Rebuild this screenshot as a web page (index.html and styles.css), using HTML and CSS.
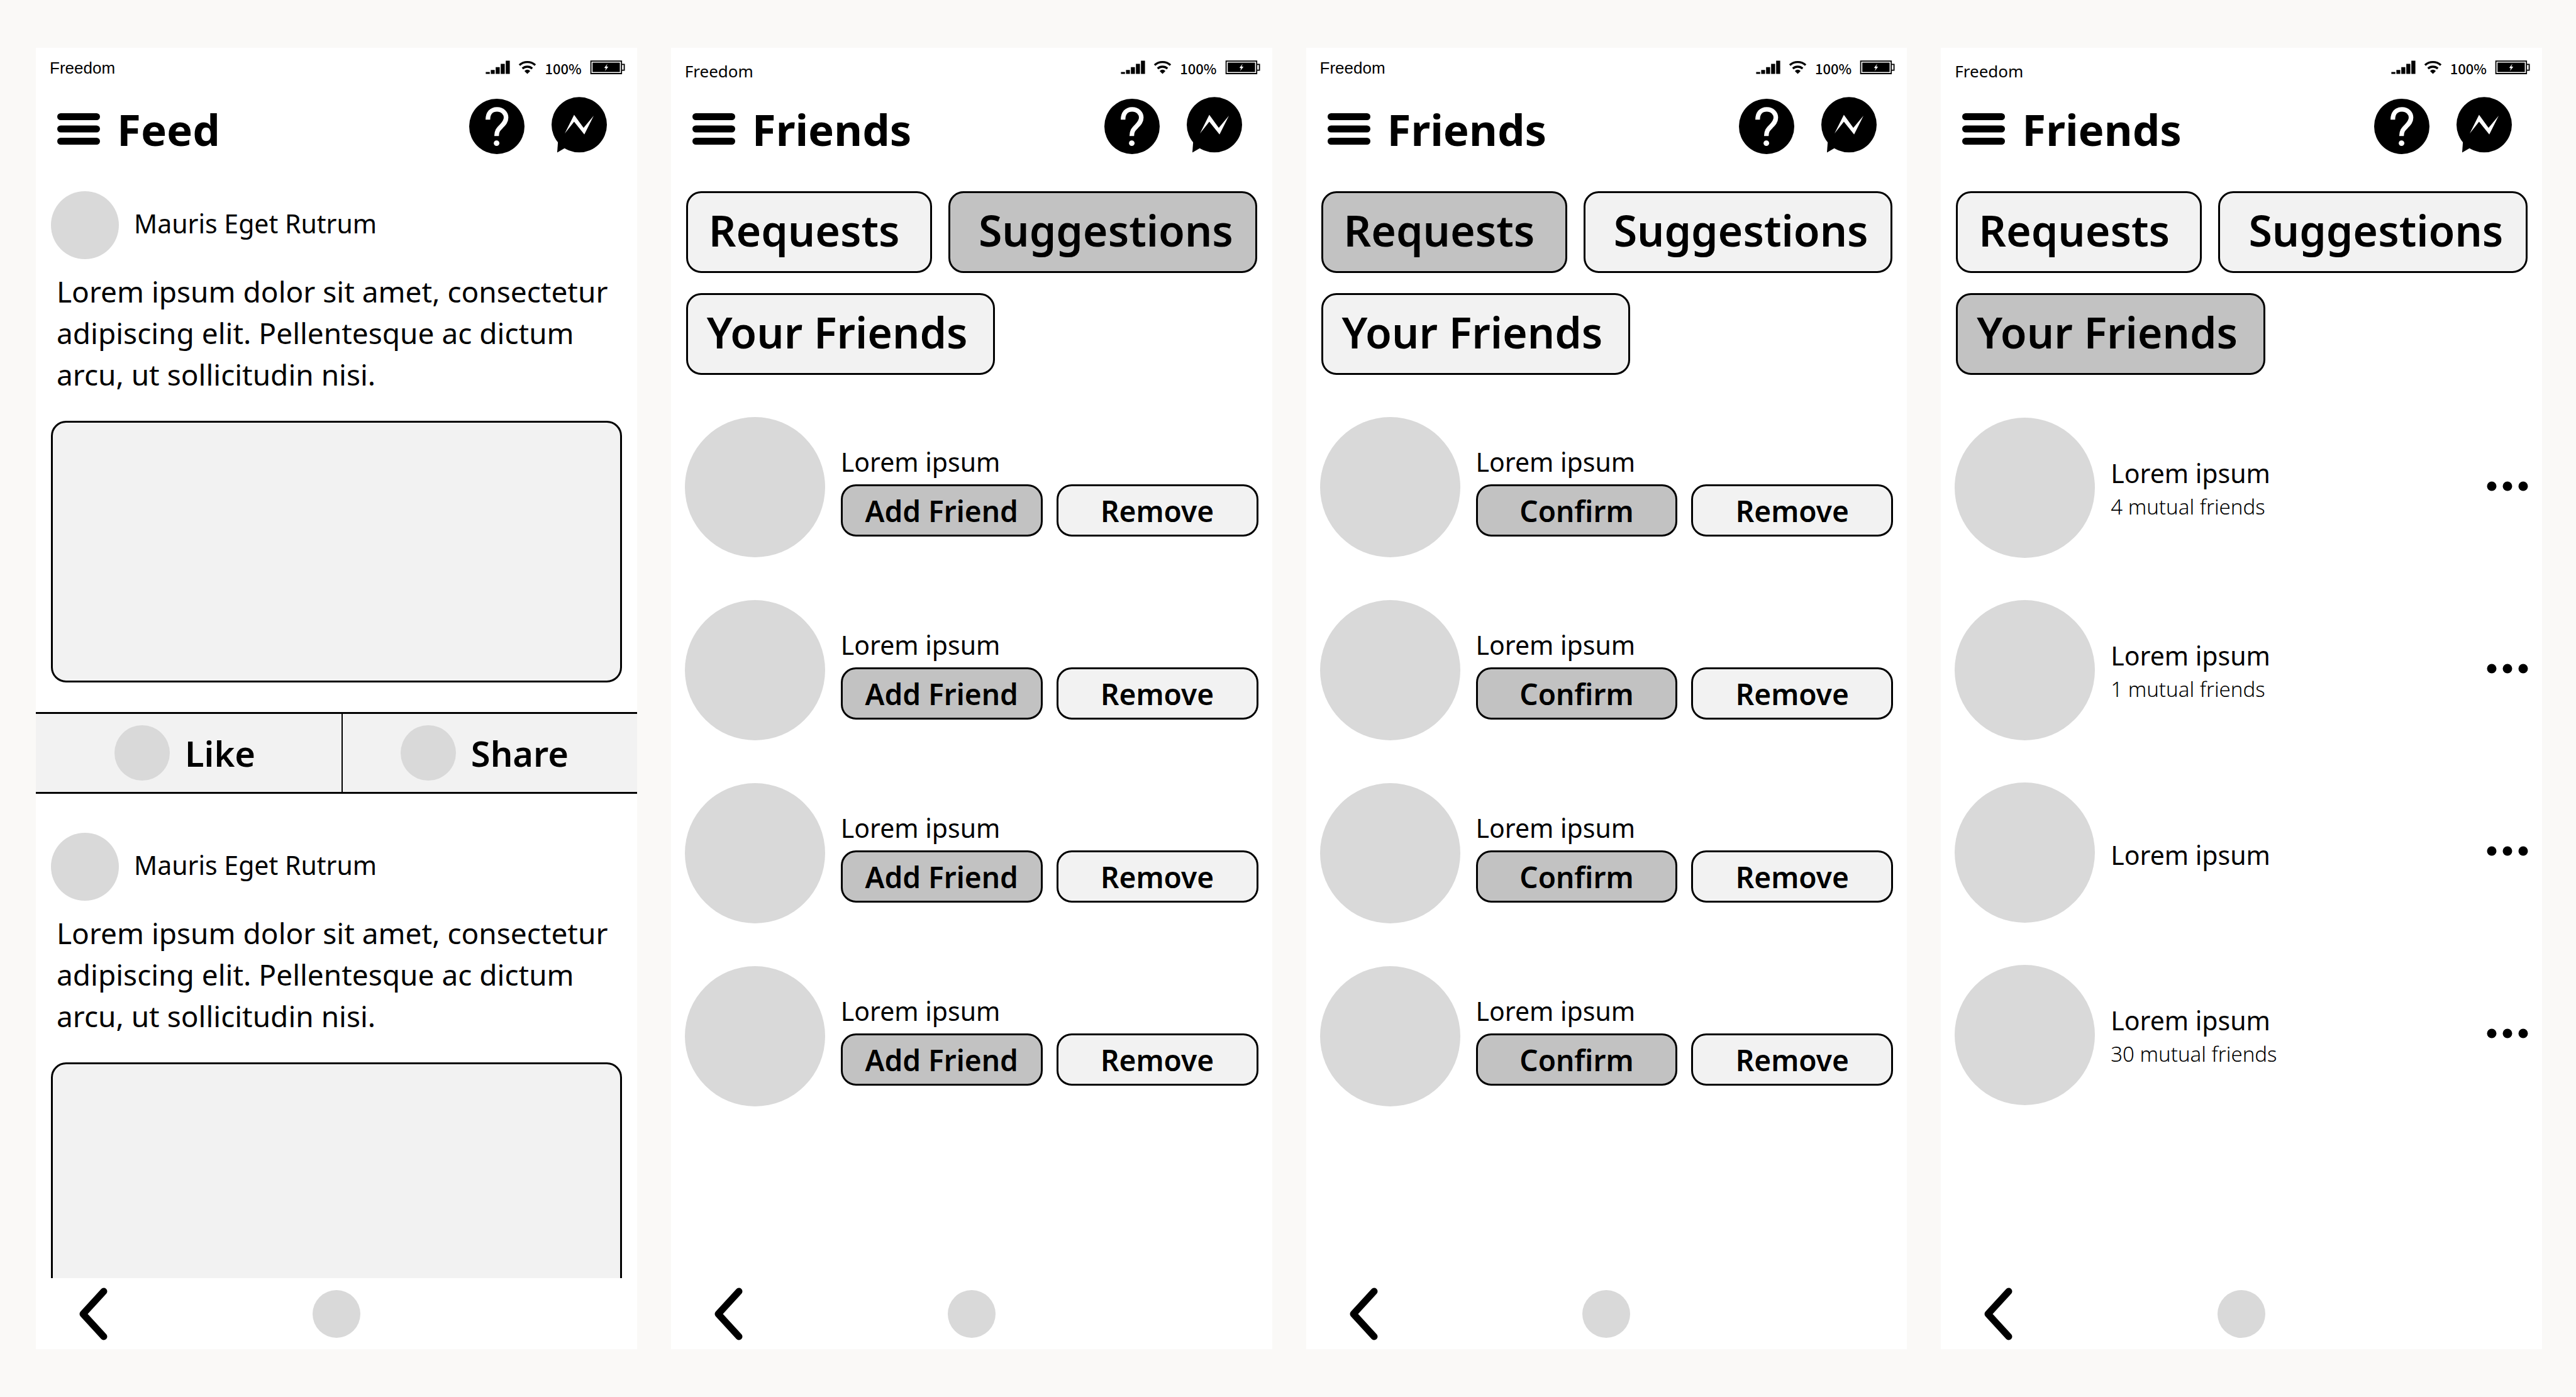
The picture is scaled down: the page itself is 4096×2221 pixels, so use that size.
FILE: index.html
```html
<!DOCTYPE html>
<html lang="en">
<head>
<meta charset="utf-8">
<meta name="viewport" content="width=device-width, initial-scale=1">
<title>Feed and Friends wireframes</title>
<link rel="stylesheet" href="styles.css">
</head>
<body>

<svg class="sprite" aria-hidden="true">
  <symbol id="signal" viewBox="0 0 191 110">
    <path d="M0 92h32v16H0zM40 76h31v32H40zM79 54h32v54H79zM119 28h32v80h-32zM159 3h32v105h-32z"/>
  </symbol>
  <symbol id="wifi" viewBox="0 0 142 110">
    <path d="M8 37A95 95 0 0 1 134 37M32 65A58 58 0 0 1 110 65" fill="none" stroke="currentColor" stroke-width="17"/>
    <path d="M48 85Q71 62 94 85L71 108Z"/>
  </symbol>
  <symbol id="battery" viewBox="0 0 274 110">
    <path d="M5 6H248V105H5ZM252 32H270V78H252" fill="none" stroke="currentColor" stroke-width="9"/>
    <path d="M18 18H235V93H18Z"/>
    <path d="M137 26L111 60L125 62L116 85L143 51L128 49Z" fill="#fff"/>
  </symbol>
  <symbol id="menu" viewBox="0 0 68 50">
    <path d="M0 5.500a5.500 5.500 0 0 1 5.500-5.500h57a5.500 5.500 0 0 1 0 11h-57a5.500 5.500 0 0 1-5.500-5.500zM0 25a5.500 5.500 0 0 1 5.500-5.500h57a5.500 5.500 0 0 1 0 11h-57a5.500 5.500 0 0 1-5.500-5.500zM0 44.500a5.500 5.500 0 0 1 5.500-5.500h57a5.500 5.500 0 0 1 0 11h-57a5.500 5.500 0 0 1-5.500-5.500z"/>
  </symbol>
  <symbol id="help" viewBox="0 0 432 446">
    <circle cx="216" cy="230" r="216"/>
    <path d="M146 178C146 128 173 97 217 97C261 97 288 127 288 162C288 192 270 210 251 229C229 251 214 265 214 305" fill="none" stroke="#fff" stroke-width="36"/>
    <circle cx="214" cy="361" r="22" fill="#fff"/>
  </symbol>
  <symbol id="messenger" viewBox="0 0 432 446">
    <circle cx="216" cy="217" r="216"/>
    <path d="M51 340L44 434L120 390Z"/>
    <path d="M176 140L250 242L329 147L256 293L176 193L103 285Z" fill="#fff"/>
  </symbol>
  <symbol id="back" viewBox="0 0 46 84">
    <path d="M40 6L7 42L40 78" fill="none" stroke="currentColor" stroke-width="11" stroke-linecap="round" stroke-linejoin="round"/>
  </symbol>
  <symbol id="more" viewBox="0 0 66 16">
    <circle cx="8" cy="8" r="7.500"/><circle cx="33" cy="8" r="7.500"/><circle cx="58" cy="8" r="7.500"/>
  </symbol>
</svg>

<section class="phone">
  <div class="status">
    <span class="carrier">Freedom</span>
    <svg class="signal"><use href="#signal"/></svg>
    <svg class="wifi"><use href="#wifi"/></svg>
    <span class="charge">100%</span>
    <svg class="battery"><use href="#battery"/></svg>
  </div>
  <header class="header">
    <button class="icon-button" type="button" aria-label="Menu"><svg class="menu"><use href="#menu"/></svg></button>
    <h1 class="title">Feed</h1>
    <div class="header-actions">
      <button class="icon-button" type="button" aria-label="Help"><svg class="round-icon"><use href="#help"/></svg></button>
      <button class="icon-button" type="button" aria-label="Messenger"><svg class="round-icon"><use href="#messenger"/></svg></button>
    </div>
  </header>
  <main class="content">
    <article class="post">
      <div class="author"><span class="author-photo"></span><span class="name">Mauris Eget Rutrum</span></div>
      <p class="post-text">Lorem ipsum dolor sit amet, consectetur adipiscing elit. Pellentesque ac dictum arcu, ut sollicitudin nisi.</p>
      <div class="media"></div>
      <div class="reactions">
        <button class="reaction like" type="button"><span class="reaction-icon"></span>Like</button>
        <button class="reaction share" type="button"><span class="reaction-icon"></span>Share</button>
      </div>
    </article>
    <article class="post">
      <div class="author"><span class="author-photo"></span><span class="name">Mauris Eget Rutrum</span></div>
      <p class="post-text">Lorem ipsum dolor sit amet, consectetur adipiscing elit. Pellentesque ac dictum arcu, ut sollicitudin nisi.</p>
      <div class="media"></div>
    </article>
  </main>
  <nav class="bottom-nav">
    <button class="icon-button back" type="button" aria-label="Back"><svg class="back-icon"><use href="#back"/></svg></button>
    <button class="icon-button home" type="button" aria-label="Home"></button>
  </nav>
</section>

<section class="phone">
  <div class="status">
    <span class="carrier carrier-alt">Freedom</span>
    <svg class="signal"><use href="#signal"/></svg>
    <svg class="wifi"><use href="#wifi"/></svg>
    <span class="charge">100%</span>
    <svg class="battery"><use href="#battery"/></svg>
  </div>
  <header class="header">
    <button class="icon-button" type="button" aria-label="Menu"><svg class="menu"><use href="#menu"/></svg></button>
    <h1 class="title">Friends</h1>
    <div class="header-actions">
      <button class="icon-button" type="button" aria-label="Help"><svg class="round-icon"><use href="#help"/></svg></button>
      <button class="icon-button" type="button" aria-label="Messenger"><svg class="round-icon"><use href="#messenger"/></svg></button>
    </div>
  </header>
  <main class="content">
    <div class="tabs">
      <button class="tab requests" type="button">Requests</button>
      <button class="tab suggestions selected" type="button">Suggestions</button>
      <button class="tab your-friends" type="button">Your Friends</button>
    </div>
    <ul class="people">
      <li class="person">
        <span class="photo"></span>
        <div class="offer"><span class="name">Lorem ipsum</span>
          <div class="choices"><button class="choice selected" type="button">Add Friend</button><button class="choice" type="button">Remove</button></div></div>
      </li>
      <li class="person">
        <span class="photo"></span>
        <div class="offer"><span class="name">Lorem ipsum</span>
          <div class="choices"><button class="choice selected" type="button">Add Friend</button><button class="choice" type="button">Remove</button></div></div>
      </li>
      <li class="person">
        <span class="photo"></span>
        <div class="offer"><span class="name">Lorem ipsum</span>
          <div class="choices"><button class="choice selected" type="button">Add Friend</button><button class="choice" type="button">Remove</button></div></div>
      </li>
      <li class="person">
        <span class="photo"></span>
        <div class="offer"><span class="name">Lorem ipsum</span>
          <div class="choices"><button class="choice selected" type="button">Add Friend</button><button class="choice" type="button">Remove</button></div></div>
      </li>
    </ul>
  </main>
  <nav class="bottom-nav">
    <button class="icon-button back" type="button" aria-label="Back"><svg class="back-icon"><use href="#back"/></svg></button>
    <button class="icon-button home" type="button" aria-label="Home"></button>
  </nav>
</section>

<section class="phone">
  <div class="status">
    <span class="carrier">Freedom</span>
    <svg class="signal"><use href="#signal"/></svg>
    <svg class="wifi"><use href="#wifi"/></svg>
    <span class="charge">100%</span>
    <svg class="battery"><use href="#battery"/></svg>
  </div>
  <header class="header">
    <button class="icon-button" type="button" aria-label="Menu"><svg class="menu"><use href="#menu"/></svg></button>
    <h1 class="title">Friends</h1>
    <div class="header-actions">
      <button class="icon-button" type="button" aria-label="Help"><svg class="round-icon"><use href="#help"/></svg></button>
      <button class="icon-button" type="button" aria-label="Messenger"><svg class="round-icon"><use href="#messenger"/></svg></button>
    </div>
  </header>
  <main class="content">
    <div class="tabs">
      <button class="tab requests selected" type="button">Requests</button>
      <button class="tab suggestions" type="button">Suggestions</button>
      <button class="tab your-friends" type="button">Your Friends</button>
    </div>
    <ul class="people">
      <li class="person">
        <span class="photo"></span>
        <div class="offer"><span class="name">Lorem ipsum</span>
          <div class="choices"><button class="choice selected" type="button">Confirm</button><button class="choice" type="button">Remove</button></div></div>
      </li>
      <li class="person">
        <span class="photo"></span>
        <div class="offer"><span class="name">Lorem ipsum</span>
          <div class="choices"><button class="choice selected" type="button">Confirm</button><button class="choice" type="button">Remove</button></div></div>
      </li>
      <li class="person">
        <span class="photo"></span>
        <div class="offer"><span class="name">Lorem ipsum</span>
          <div class="choices"><button class="choice selected" type="button">Confirm</button><button class="choice" type="button">Remove</button></div></div>
      </li>
      <li class="person">
        <span class="photo"></span>
        <div class="offer"><span class="name">Lorem ipsum</span>
          <div class="choices"><button class="choice selected" type="button">Confirm</button><button class="choice" type="button">Remove</button></div></div>
      </li>
    </ul>
  </main>
  <nav class="bottom-nav">
    <button class="icon-button back" type="button" aria-label="Back"><svg class="back-icon"><use href="#back"/></svg></button>
    <button class="icon-button home" type="button" aria-label="Home"></button>
  </nav>
</section>

<section class="phone">
  <div class="status">
    <span class="carrier carrier-alt">Freedom</span>
    <svg class="signal"><use href="#signal"/></svg>
    <svg class="wifi"><use href="#wifi"/></svg>
    <span class="charge">100%</span>
    <svg class="battery"><use href="#battery"/></svg>
  </div>
  <header class="header">
    <button class="icon-button" type="button" aria-label="Menu"><svg class="menu"><use href="#menu"/></svg></button>
    <h1 class="title">Friends</h1>
    <div class="header-actions">
      <button class="icon-button" type="button" aria-label="Help"><svg class="round-icon"><use href="#help"/></svg></button>
      <button class="icon-button" type="button" aria-label="Messenger"><svg class="round-icon"><use href="#messenger"/></svg></button>
    </div>
  </header>
  <main class="content">
    <div class="tabs">
      <button class="tab requests" type="button">Requests</button>
      <button class="tab suggestions" type="button">Suggestions</button>
      <button class="tab your-friends selected" type="button">Your Friends</button>
    </div>
    <ul class="people friends">
      <li class="person">
        <span class="photo"></span>
        <div class="friend"><span class="name">Lorem ipsum</span><span class="mutual">4 mutual friends</span></div>
        <button class="icon-button more" type="button" aria-label="More options"><svg class="more-icon"><use href="#more"/></svg></button>
      </li>
      <li class="person">
        <span class="photo"></span>
        <div class="friend"><span class="name">Lorem ipsum</span><span class="mutual">1 mutual friends</span></div>
        <button class="icon-button more" type="button" aria-label="More options"><svg class="more-icon"><use href="#more"/></svg></button>
      </li>
      <li class="person">
        <span class="photo"></span>
        <div class="friend"><span class="name">Lorem ipsum</span></div>
        <button class="icon-button more" type="button" aria-label="More options"><svg class="more-icon"><use href="#more"/></svg></button>
      </li>
      <li class="person">
        <span class="photo"></span>
        <div class="friend"><span class="name">Lorem ipsum</span><span class="mutual">30 mutual friends</span></div>
        <button class="icon-button more" type="button" aria-label="More options"><svg class="more-icon"><use href="#more"/></svg></button>
      </li>
    </ul>
  </main>
  <nav class="bottom-nav">
    <button class="icon-button back" type="button" aria-label="Back"><svg class="back-icon"><use href="#back"/></svg></button>
    <button class="icon-button home" type="button" aria-label="Home"></button>
  </nav>
</section>

</body>
</html>
```
FILE: styles.css
```css
:root {
  --canvas: #faf9f7;
  --panel: #f2f2f2;
  --selected: #c2c2c2;
  --placeholder: #d9d9d9;
  --ink: #000;
}

*, *::before, *::after { box-sizing: border-box; }

body {
  margin: 0;
  height: 100vh;
  padding: 76px 54px 76px 57px;
  display: grid;
  grid-template-columns: repeat(4, minmax(0, 1fr));
  grid-template-rows: minmax(0, 1fr);
  gap: 54px;
  background: var(--canvas);
  color: var(--ink);
  font-family: "Noto Sans", "Open Sans", sans-serif;
}

h1, p, ul { margin: 0; padding: 0; }
ul { list-style: none; }
svg { display: block; flex: none; fill: currentColor; }
button { margin: 0; padding: 0; border: 0; color: inherit; font: inherit; cursor: pointer; }

.sprite { position: absolute; width: 0; height: 0; }
.icon-button { flex: none; background: none; }

.phone { display: flex; flex-direction: column; background: #fff; }

/* Status bar */
.status { flex: none; display: flex; align-items: flex-start; gap: 13px; height: 64px; padding: 20px 19px 0 22px; }
.carrier { margin-right: auto; font: 26px/24px "Liberation Sans", sans-serif; }
.carrier-alt { font: 26px/34px "Noto Sans", sans-serif; }
.charge { font: 500 22px/24px "Noto Sans CJK SC", sans-serif; }
.signal { width: 39px; height: 22px; }
.wifi { width: 29px; height: 22px; }
.battery { width: 56px; height: 22px; }

/* Header */
.header { flex: none; display: flex; align-items: center; height: 130px; padding: 0 48px 0 34px; }
.menu { width: 68px; height: 50px; }
.title { margin-left: 27px; font-size: 69px; font-weight: 700; line-height: 94px; }
.header-actions { display: flex; gap: 43px; margin-left: auto; padding-bottom: 12px; }
.round-icon { width: 88px; height: 91px; }

.content { flex: 1; min-height: 0; padding-top: 34px; overflow-y: auto; scrollbar-width: none; }

/* Feed */
.post { margin-bottom: 62px; }
.author { display: flex; align-items: center; gap: 24px; padding: 0 24px; }
.author-photo { flex: none; width: 108px; height: 108px; border-radius: 50%; background: var(--placeholder); }
.name { font-size: 41px; line-height: 44px; }
.author .name { padding-bottom: 6px; }
.post-text { margin-top: 18px; padding: 0 24px 0 33px; font-size: 46px; line-height: 66px; }
.media { height: 416px; margin: 41px 24px 47px; border: 3px solid var(--ink); border-radius: 24px; background: var(--panel); }
.reactions { display: grid; grid-template-columns: 49fr 47fr; height: 130px; border-top: 3px solid var(--ink); border-bottom: 3px solid var(--ink); }
.reaction { display: flex; align-items: center; gap: 24px; background: var(--panel); font-size: 56px; font-weight: 600; line-height: 76px; }
.reaction-icon { flex: none; width: 88px; height: 88px; border-radius: 50%; background: var(--placeholder); }
.like { padding-left: 125px; border-right: 2px solid var(--ink); }
.share { padding-left: 92px; }

/* Friends tabs */
.tabs { display: flex; flex-wrap: wrap; gap: 32px 26px; padding: 0 22px 0 24px; }
.tab { height: 130px; padding-bottom: 6px; border: 3px solid var(--ink); border-radius: 24px; background: var(--panel); font-size: 68px; font-weight: 600; line-height: 92px; text-align: left; white-space: nowrap; }
.requests { width: 43%; padding-left: 33px; }
.suggestions { width: 54%; padding-left: 45px; }
.your-friends { width: 54%; padding-left: 30px; }
.tab.selected, .choice.selected { background: var(--selected); }

/* People lists */
.people { display: grid; gap: 68px; padding: 67px 22px 0; }
.person { display: flex; align-items: center; gap: 25px; }
.photo { flex: none; width: 223px; height: 223px; border-radius: 50%; background: var(--placeholder); }
.offer { flex: 1; align-self: flex-end; display: grid; gap: 14px; padding-bottom: 33px; }
.choices { display: grid; grid-template-columns: 1fr 1fr; gap: 22px; }
.choice { height: 83px; border: 3px solid var(--ink); border-radius: 24px; background: var(--panel); font-size: 46px; font-weight: 600; line-height: 62px; }

.friends { gap: 67px; padding-top: 68px; }
.friend { flex: 1; display: grid; padding-top: 6px; }
.friend .name { line-height: 54px; }
.mutual { font-size: 33px; font-weight: 300; line-height: 54px; }
.more { padding-bottom: 6px; }
.more-icon { width: 66px; height: 16px; }

/* Bottom navigation */
.bottom-nav { flex: none; display: grid; grid-template-columns: 1fr auto 1fr; align-items: center; height: 113px; padding: 0 68px; }
.back { justify-self: start; }
.back-icon { width: 46px; height: 84px; }
.home { width: 76px; height: 76px; border-radius: 50%; background: var(--placeholder); }
```
